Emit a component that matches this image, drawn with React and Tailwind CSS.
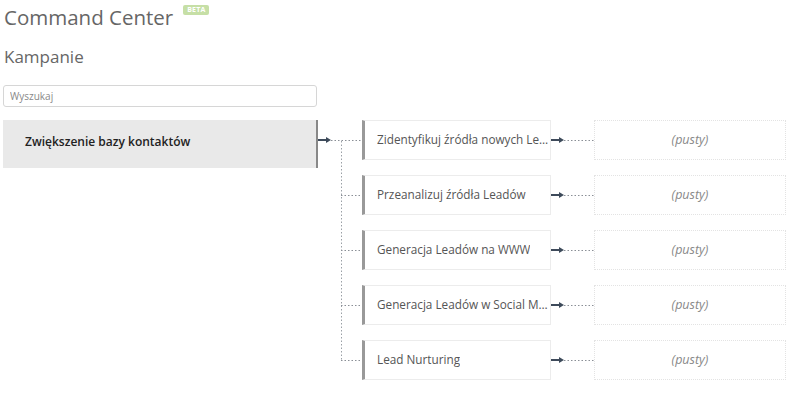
const CHILDREN = [
  'Zidentyfikuj źródła nowych Leadów',
  'Przeanalizuj źródła Leadów',
  'Generacja Leadów na WWW',
  'Generacja Leadów w Social Media',
  'Lead Nurturing',
]

const Arrow = ({ width }) => (
  <svg width={width} height="40" className="shrink-0">
    <line x1="0" y1="20" x2="9" y2="20" stroke="#3d4a5a" strokeWidth="2" />
    <polygon points="8,17 13,20 8,23" fill="#3d4a5a" />
    <line x1="13" y1="20.5" x2={width} y2="20.5" stroke="#8a8f96" strokeWidth="1" strokeDasharray="1.5 2" />
  </svg>
)

const Connector = () => (
  <svg width="44" height="260" className="shrink-0">
    <line x1="0" y1="20" x2="9" y2="20" stroke="#3d4a5a" strokeWidth="2" />
    <polygon points="8,17 13,20 8,23" fill="#3d4a5a" />
    <line x1="13" y1="20.5" x2="44" y2="20.5" stroke="#8a8f96" strokeWidth="1" strokeDasharray="1.5 2" />
    <line x1="23.5" y1="21" x2="23.5" y2="240" stroke="#9aa0a6" strokeWidth="1" strokeDasharray="1.5 2" />
    {[75, 130, 185, 240].map((y) => (
      <line key={y} x1="23" y1={y + 0.5} x2="44" y2={y + 0.5} stroke="#8a8f96" strokeWidth="1" strokeDasharray="1.5 2" />
    ))}
  </svg>
)

const App = () => (
  <div className="w-[800px] h-[395px] bg-white overflow-hidden pl-[3px] font-['Open_Sans',sans-serif]">
    {/* Header */}
    <div className="flex items-start pt-[3px] pl-px">
      <h1 className="text-[20.5px] leading-[28px] text-[#666] font-normal">Command Center</h1>
      <span className="ml-[10px] mt-[2px] px-[4px] h-[10px] leading-[10px] rounded-[2px] bg-[#c6dfa6] text-white text-[7px] font-bold tracking-wide">
        BETA
      </span>
    </div>
    <h2 className="mt-[14px] pl-px text-[17px] leading-[24px] text-[#666] font-normal">Kampanie</h2>

    {/* Search */}
    <input
      placeholder="Wyszukaj"
      className="mt-[16px] block w-[314px] h-[22px] px-[6px] text-[10px] text-[#555] placeholder:text-[#888] border border-[#d6d6d6] rounded-[3px] outline-none"
    />

    {/* Tree */}
    <div className="flex mt-[13px]">
      <div className="w-[315px] h-[48px] shrink-0 bg-[#e9e9e9] border-r-2 border-[#888] pl-[22px] pt-[12px] leading-[16px]">
        <span className="text-[12px] leading-[16px] font-semibold text-[#222]">Zwiększenie bazy kontaktów</span>
      </div>
      <Connector />
      <div className="flex flex-col gap-[15px]">
        {CHILDREN.map((c) => (
          <div key={c} className="flex items-center h-[40px]">
            <div className="w-[189px] h-[40px] shrink-0 border border-[#ececec] border-l-[3px] border-l-[#999] pl-[12px] flex items-center">
              <span className="truncate text-[11.75px] text-[#555]">{c}</span>
            </div>
            <Arrow width={43} />
            <div className="w-[192px] h-[40px] shrink-0 border border-dotted border-[#e3e3e3] flex items-center justify-center">
              <span className="italic text-[12.5px] text-[#888]">(pusty)</span>
            </div>
          </div>
        ))}
      </div>
    </div>
  </div>
)

export default App
